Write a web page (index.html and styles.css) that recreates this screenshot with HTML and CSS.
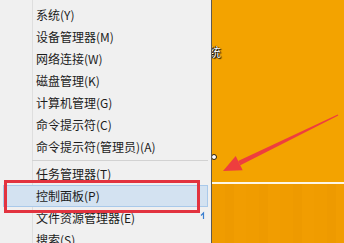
FILE: index.html
```html
<!DOCTYPE html>
<html lang="zh">
<head>
<meta charset="utf-8">
<link rel="stylesheet" href="styles.css">
</head>
<body>
<div class="screen">
  <div class="menu">
    <ul class="items">
      <li class="item">系统(Y)</li>
      <li class="item">设备管理器(M)</li>
      <li class="item">网络连接(W)</li>
      <li class="item">磁盘管理(K)</li>
      <li class="item">计算机管理(G)</li>
      <li class="item">命令提示符(C)</li>
      <li class="item">命令提示符(管理员)(A)</li>
      <li class="sep"></li>
      <li class="item">任务管理器(T)</li>
      <li class="item active">控制面板(P)</li>
      <li class="item">文件资源管理器(E)</li>
      <li class="item">搜索(S)</li>
    </ul>
  </div>
  <div class="desktop">
    <div class="upper">
      <span class="label">统</span>
      <span class="dot"></span>
    </div>
    <div class="hline"></div>
    <div class="lower"></div>
  </div>
  <svg class="annot" width="344" height="243" viewBox="0 0 344 243">
    <rect x="5.5" y="181.5" width="193" height="30" fill="none" stroke="#e2333f" stroke-width="3"/>
    <polygon points="240.3,165.3 238.1,160.9 337.7,114.4 338.3,115.6" fill="#ee3e3e"/>
    <polygon points="223,171 235.7,155.9 242.7,170.3" fill="#ee3e3e"/>
    <path d="M201 215.5 L203.5 213 L203.5 219" fill="none" stroke="#3a7fd0" stroke-width="1.2"/>
  </svg>
</div>
</body>
</html>
```
FILE: styles.css
```css
html, body {
  margin: 0;
  padding: 0;
}
body {
  width: 344px;
  height: 243px;
  overflow: hidden;
  font-family: "Noto Sans CJK SC", "Noto Sans", sans-serif;
}
.screen {
  position: relative;
  display: flex;
  width: 344px;
  height: 243px;
  overflow: hidden;
}
.menu {
  width: 211px;
  flex: none;
  background: linear-gradient(90deg, #f0f0f0 0 32px, #dedede 32px 33px, #f0f0f0 33px);
  border-right: 1px solid #5e5a52;
}
.items {
  list-style: none;
  margin: 0;
  padding: 4px 0 0 0;
}
.item {
  height: 20px;
  line-height: 20px;
  margin: 0 3px;
  padding-left: 32px;
  border: 1px solid transparent;
  font-size: 12px;
  color: #1c1c1c;
  white-space: nowrap;
}
.item.active {
  background: #d3e2f1;
  border-color: #a9c9ea;
}
.sep {
  height: 5px;
  margin: 0 3px 0 32px;
  background: linear-gradient(180deg, transparent 0 2px, #d2d2d2 2px 3px, transparent 3px);
}
.desktop {
  flex: 1;
  display: flex;
  flex-direction: column;
  position: relative;
  overflow: hidden;
}
.upper {
  height: 182px;
  background: #f3a300;
  position: relative;
}
.label {
  position: absolute;
  left: -3px;
  top: 44px;
  font-size: 12px;
  line-height: 16px;
  color: #fff;
  text-shadow: 0 0 1px #000, 1px 1px 1px #000, -1px 0 1px #000;
}
.dot {
  position: absolute;
  left: -1px;
  top: 154px;
  width: 4px;
  height: 4px;
  border-radius: 50%;
  background: #fff;
  border: 1px solid #2a1a00;
}
.hline {
  height: 2px;
  background: #fdf6e6;
}
.lower {
  flex: 1;
  background: repeating-linear-gradient(90deg, #f09c00 0 13px, #ee9a00 13px 22px, #f19d01 22px 34px);
}
.annot {
  position: absolute;
  left: 0;
  top: 0;
  pointer-events: none;
}
```
